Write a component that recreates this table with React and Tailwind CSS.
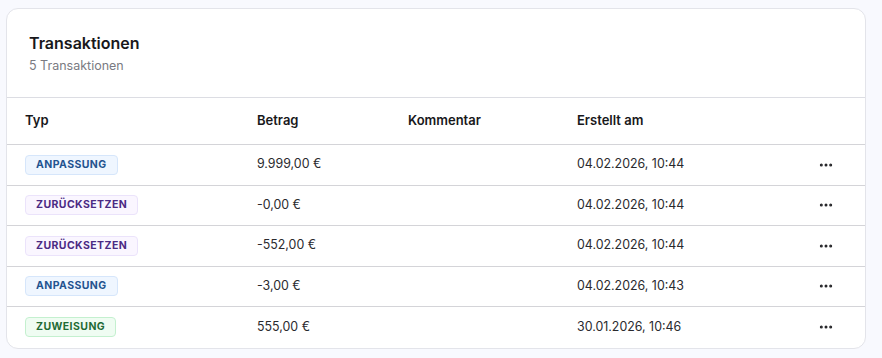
import React from 'react';
import { Ellipsis } from 'lucide-react';

const badgeStyles = {
    ANPASSUNG: 'bg-[#eff6ff] border-[#d6e6fb] text-[#24538f]',
    ZURÜCKSETZEN: 'bg-[#faf6ff] border-[#ebe3fb] text-[#4b2a84]',
    ZUWEISUNG: 'bg-[#effcf2] border-[#c4f0cf] text-[#1f6b35]',
};

const rows = [
    { typ: 'ANPASSUNG', betrag: '9.999,00 €', kommentar: '', datum: '04.02.2026, 10:44' },
    { typ: 'ZURÜCKSETZEN', betrag: '-0,00 €', kommentar: '', datum: '04.02.2026, 10:44' },
    { typ: 'ZURÜCKSETZEN', betrag: '-552,00 €', kommentar: '', datum: '04.02.2026, 10:44' },
    { typ: 'ANPASSUNG', betrag: '-3,00 €', kommentar: '', datum: '04.02.2026, 10:43' },
    { typ: 'ZUWEISUNG', betrag: '555,00 €', kommentar: '', datum: '30.01.2026, 10:46' },
];

const cols = 'grid grid-cols-[232px_151px_169px_1fr_106px] items-center';

const Badge = ({ label }) => (
    <span
        className={`inline-flex items-center h-[20px] px-[10px] rounded-[4px] border text-[10.5px] font-bold tracking-[0.04em] ${badgeStyles[label]}`}
    >
        {label}
    </span>
);

export default function App() {
    return (
        <div
            className="min-h-[358px] bg-[#f8f9fe] pl-[6px] pr-[16px] pt-[8px] pb-[10px]"
            style={{ fontFamily: 'Inter, "Noto Sans", sans-serif' }}
        >
            <div className="bg-white border border-[#e3e4ea] rounded-xl overflow-hidden">
                <div className="px-[22px] pt-[22px] pb-[23px] border-b border-[#dcdde3]">
                    <h2 className="text-[16px] leading-6 font-semibold text-[#18181b]">Transaktionen</h2>
                    <p className="mt-[3px] text-[12.5px] leading-4 text-[#7a7a82]">5 Transaktionen</p>
                </div>
                <div className={`${cols} h-[47px] border-b border-[#d4d4d8] text-[13px] font-semibold text-[#18181b]`}>
                    <div className="pl-[18px]">Typ</div>
                    <div className="pl-[18px]">Betrag</div>
                    <div className="pl-[18px]">Kommentar</div>
                    <div className="pl-[18px]">Erstellt am</div>
                    <div></div>
                </div>
                {rows.map((r, i) => (
                    <div
                        key={i}
                        className={`${cols} h-[40.5px] text-[12.4px] text-[#2a2a2e] ${i < rows.length - 1 ? 'border-b border-[#d4d4d8]' : ''}`}
                    >
                        <div className="pl-[18px]">
                            <Badge label={r.typ} />
                        </div>
                        <div className="pl-[18px]">{r.betrag}</div>
                        <div className="pl-[18px]">{r.kommentar}</div>
                        <div className="pl-[18px]">{r.datum}</div>
                        <div className="flex justify-end pr-[31px] text-[#27272a]">
                            <Ellipsis size={16} strokeWidth={2.5} />
                        </div>
                    </div>
                ))}
            </div>
        </div>
    );
}
